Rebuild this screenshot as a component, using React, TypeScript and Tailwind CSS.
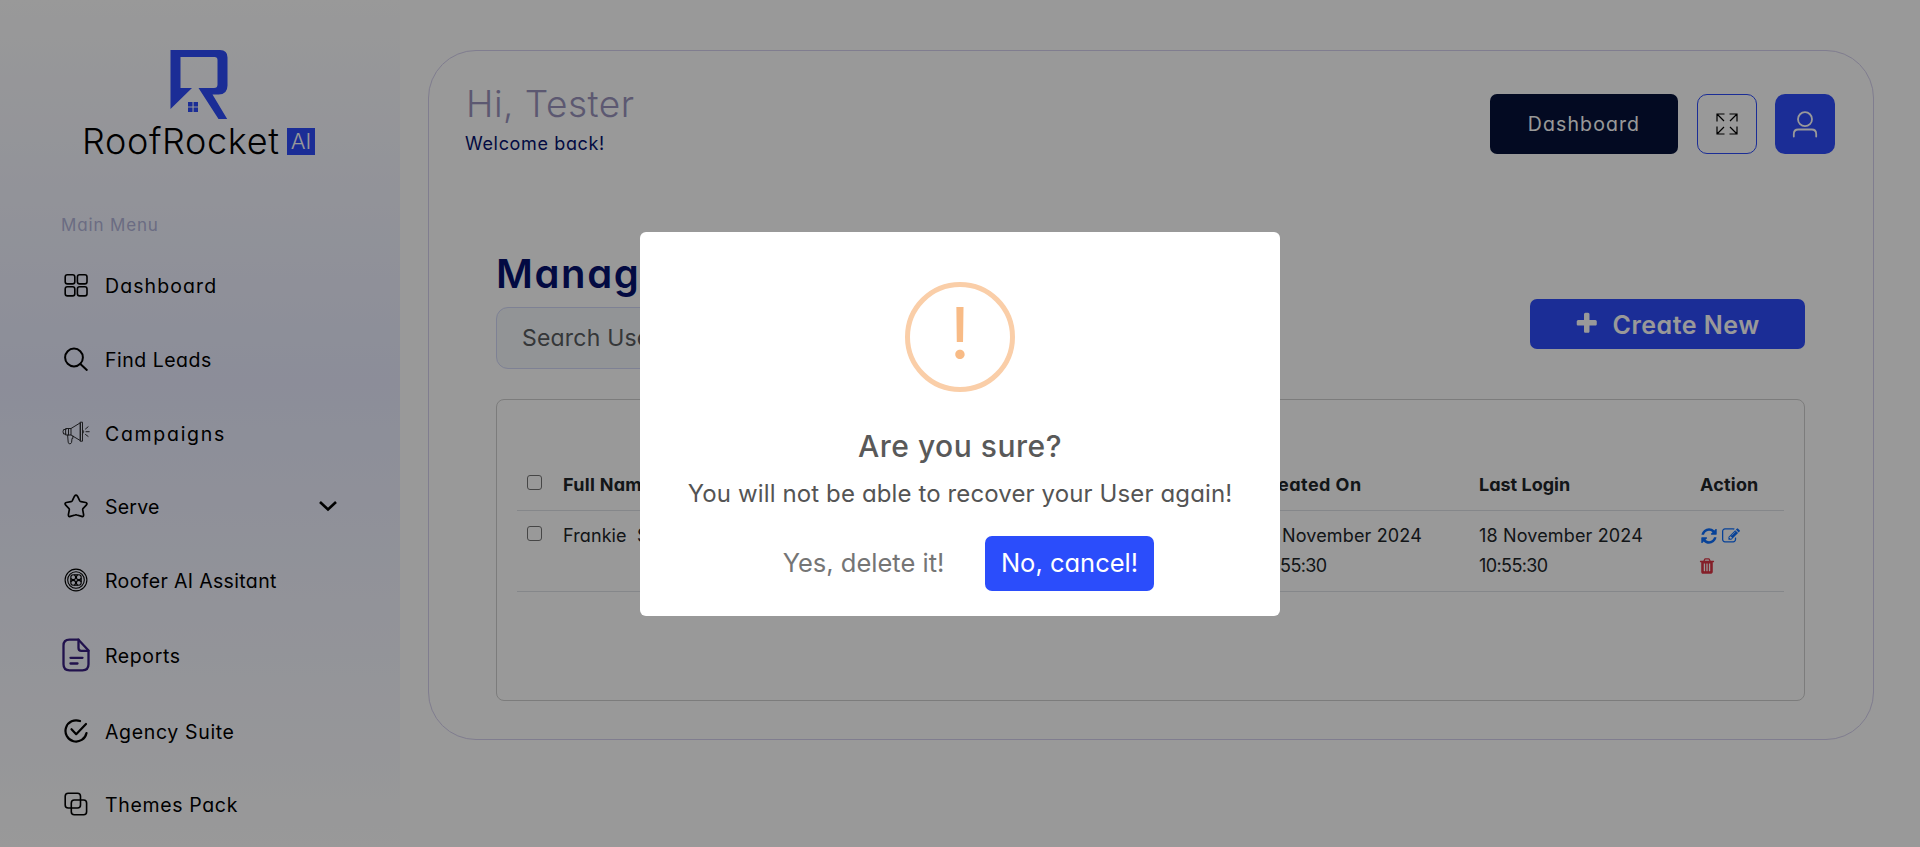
import type { ReactNode } from 'react';

const stroke = {
  fill: 'none',
  stroke: 'currentColor',
  strokeLinecap: 'round' as const,
  strokeLinejoin: 'round' as const,
};

function DashboardIcon() {
  return (
    <svg width="24" height="24" viewBox="0 0 24 24" {...stroke} strokeWidth="1.6">
      <rect x="1.2" y="1.7" width="9.6" height="9.2" rx="2.2" />
      <rect x="13.4" y="1.7" width="9.6" height="9.2" rx="2.2" />
      <rect x="1.2" y="13.7" width="9.6" height="9.2" rx="2.2" />
      <rect x="13.4" y="13.7" width="9.6" height="9.2" rx="2.2" />
    </svg>
  );
}

function SearchIcon() {
  return (
    <svg width="24" height="24" viewBox="0 0 24 24" {...stroke} strokeWidth="2">
      <circle cx="10" cy="10.5" r="8.9" />
      <path d="M16.4 17l6.4 5.9" />
    </svg>
  );
}

function CampaignIcon() {
  return (
    <svg width="28" height="24" viewBox="0 0 28 24" {...stroke} strokeWidth="1" className="opacity-80">
      <path d="M4 7.5h5v6.500H4zM9 7.500L18.500 1.700v18L9 14M18.500 1.200h2v19h-2z" />
      <path d="M6.500 7.500V14M4 8.500H1.600Q.4 10.700 1.600 13H4M20.600 8.500q2.400 2.200 0 4.400" />
      <path d="M5.600 14.200l.6 7q.2 1.600 1.600 1.600t1.800-1.400l.4-4h.9v-2.400" />
      <path d="M23.500 8l2.600-2.200M24 10.700h3.200M23.500 13.500l2.600 1.900" />
    </svg>
  );
}

function StarIcon() {
  return (
    <svg width="24" height="24" viewBox="0 0 24 24" {...stroke} strokeWidth="1.7">
      <path d="M10.500 2.200q1.500-2 3 0l2.300 4.600q.4.700 1.200.9l4.700.8q2 .6.800 2.400l-3.300 3.400q-.6.700-.5 1.500l.9 4.900q.2 2.400-1.900 1.700l-4.800-1.400q-.9-.3-1.800 0l-4.800 1.400q-2.100.7-1.900-1.700l.9-4.900q.1-.8-.5-1.500L1.500 10.900Q.3 9.100 2.300 8.500L7 7.700q.8-.2 1.200-.9z" />
    </svg>
  );
}

function AssistantIcon() {
  return (
    <svg width="24" height="24" viewBox="0 0 24 24" {...stroke} strokeWidth="1.1">
      <circle cx="12" cy="12" r="10.9" />
      <circle cx="12" cy="12" r="8.3" />
      <circle cx="9.2" cy="9.2" r="2.4" />
      <circle cx="14.8" cy="9.2" r="2.4" />
      <circle cx="9.2" cy="14.8" r="2.4" />
      <circle cx="14.8" cy="14.8" r="2.4" />
      <path d="M10.500 6.800h3M10.500 17.200h3M6.800 10.500v3M17.200 10.500v3" />
    </svg>
  );
}

function ReportIcon() {
  return (
    <svg width="28" height="34" viewBox="0 0 28 34" {...stroke} strokeWidth="2.3" className="text-[#371e80]">
      <path d="M16.500 1.700H7.500Q1.500 1.700 1.500 7.700v18.600q0 6 6 6h13q6 0 6-6V12.500z" />
      <path d="M16.500 1.700v8.300q0 2.800 2.800 2.800h7.200M8.500 19.800h12M8.500 25.500h7" />
    </svg>
  );
}

function AgencyIcon() {
  return (
    <svg width="24" height="24" viewBox="0 0 24 24" {...stroke} strokeWidth="2.2">
      <path d="M16 2.100A10.600 10.600 0 1 0 22.500 14" />
      <path d="M7.500 10.200l4.700 5L22 5" />
    </svg>
  );
}

function ThemesIcon() {
  return (
    <svg width="24" height="24" viewBox="0 0 24 24" {...stroke} strokeWidth="1.6">
      <rect x="1.2" y="1.2" width="15.3" height="14.8" rx="3" />
      <rect x="7.3" y="8" width="15.3" height="14.8" rx="3" />
    </svg>
  );
}

function FaIcon({ d, className }: { d: string; className: string }) {
  return (
    <svg viewBox="0 0 1792 1792" className={className} fill="currentColor">
      <path d={d} />
    </svg>
  );
}

const PLUS =
  'M1600 736v192q0 40-28 68t-68 28h-416v416q0 40-28 68t-68 28h-192q-40 0-68-28t-28-68v-416h-416q-40 0-68-28t-28-68v-192q0-40 28-68t68-28h416v-416q0-40 28-68t68-28h192q40 0 68 28t28 68v416h416q40 0 68 28t28 68z';
const REFRESH =
  'M1639 1056q0 5-1 7-64 268-268 434.5t-478 166.5q-146 0-282.5-55t-243.5-157l-129 129q-19 19-45 19t-45-19-19-45v-448q0-26 19-45t45-19h448q26 0 45 19t19 45-19 45l-137 137q71 66 161 102t187 36q134 0 250-65t186-179q11-17 53-117 8-23 30-23h192q13 0 22.5 9.5t9.5 22.5zm25-800v448q0 26-19 45t-45 19h-448q-26 0-45-19t-19-45 19-45l138-138q-148-137-349-137-134 0-250 65t-186 179q-11 17-53 117-8 23-30 23h-199q-13 0-22.5-9.5t-9.5-22.5v-7q65-268 270-434.5t480-166.5q146 0 284 55.5t245 156.5l130-129q19-19 45-19t45 19 19 45z';
const EDIT =
  'M888 1184l116-116-152-152-116 116v56h96v96h56zm440-720q-16-16-33 1l-350 350q-17 17-1 33t33-1l350-350q17-17 1-33zm80 594v190q0 119-84.5 203.5t-203.5 84.5h-832q-119 0-203.5-84.5t-84.5-203.5v-832q0-119 84.5-203.5t203.5-84.5h832q63 0 117 25 15 7 18 23 3 17-9 29l-49 49q-14 14-32 8-23-6-45-6h-832q-66 0-113 47t-47 113v832q0 66 47 113t113 47h832q66 0 113-47t47-113v-126q0-13 9-22l64-64q15-15 35-7t20 29zm-96-738l288 288-672 672h-288v-288zm444 132l-92 92-288-288 92-92q28-28 68-28t68 28l152 152q28 28 28 68t-28 68z';
const TRASH =
  'M704 1376v-704q0-14-9-23t-23-9h-64q-14 0-23 9t-9 23v704q0 14 9 23t23 9h64q14 0 23-9t9-23zm256 0v-704q0-14-9-23t-23-9h-64q-14 0-23 9t-9 23v704q0 14 9 23t23 9h64q14 0 23-9t9-23zm256 0v-704q0-14-9-23t-23-9h-64q-14 0-23 9t-9 23v704q0 14 9 23t23 9h64q14 0 23-9t9-23zm-544-992h448l-48-117q-7-9-17-11h-317q-10 2-17 11zm928 32v64q0 14-9 23t-23 9h-96v948q0 83-47 143.5t-113 60.5h-832q-66 0-113-58.5t-47-141.5v-952h-96q-14 0-23-9t-9-23v-64q0-14 9-23t23-9h309l70-167q15-37 54-63t79-26h320q40 0 79 26t54 63l70 167h309q14 0 23 9t9 23z';

type MenuItem = { label: string; icon: ReactNode; row: string; track: string; expandable?: boolean };

const menu: MenuItem[] = [
  { label: 'Dashboard', icon: <DashboardIcon />, row: 'h-[74px]', track: 'tracking-[1.1px]' },
  { label: 'Find Leads', icon: <SearchIcon />, row: 'h-[74px]', track: 'tracking-[0.5px]' },
  { label: 'Campaigns', icon: <CampaignIcon />, row: 'h-[74px]', track: 'tracking-[1.7px]' },
  { label: 'Serve', icon: <StarIcon />, row: 'h-[72px]', track: 'tracking-[0.2px]', expandable: true },
  { label: 'Roofer AI Assitant', icon: <AssistantIcon />, row: 'h-[75px]', track: 'tracking-[0.35px]' },
  { label: 'Reports', icon: <ReportIcon />, row: 'h-[76px]', track: 'tracking-[0.6px]' },
  { label: 'Agency Suite', icon: <AgencyIcon />, row: 'h-[76px]', track: 'tracking-[0.65px]' },
  { label: 'Themes Pack', icon: <ThemesIcon />, row: 'h-[70px]', track: 'tracking-[0.65px]' },
];

function Logo() {
  return (
    <div className="flex h-[110px] w-[236px] flex-col">
      <svg width="60" height="72" viewBox="0 0 60 72" className="ml-[88px] shrink-0" fill="#2d4bfa">
        <path
          fillRule="evenodd"
          d="M.5 0H50Q57.500 0 57.500 7.500V35.500Q57.500 44.500 48.500 44.500H42.500L57.200 69H48.500L28.500 38H44Q47.500 38 47.500 34.500V10Q47.500 7 44.500 7H10.500V38H22L.5 59z"
        />
        <path d="M18 52h4.500v4.500H18zM23.600 52H28v4.500h-4.400zM18 57.600h4.500V62H18zM23.600 57.600H28V62h-4.400z" />
      </svg>
      <div className="mt-[5px] flex h-[28px] items-center">
        <span className="w-[205px] text-[36px] leading-none font-[350] tracking-[0.65px] whitespace-nowrap text-black">
          RoofRocket
        </span>
        <span className="flex h-[27px] w-[28px] items-center justify-center bg-[#2d4bfa] text-[22px] leading-none font-light text-white">
          AI
        </span>
      </div>
    </div>
  );
}

function Sidebar() {
  return (
    <aside className="flex h-full w-[400px] shrink-0 flex-col overflow-hidden bg-linear-to-b from-white via-[#e9ecff] via-45% to-white">
      <div className="h-[211px] pt-[50px] pl-[82px]">
        <Logo />
      </div>
      <p className="flex h-[30px] items-center pl-[61px] text-[17px] tracking-[0.85px] text-[#b2b4da]">Main Menu</p>
      <nav className="mt-[9px] flex flex-col text-black">
        {menu.map((m) => (
          <a key={m.label} className={`flex shrink-0 items-center pl-[61px] ${m.row}`}>
            <span className="flex w-[30px] justify-center pb-[4px]">{m.icon}</span>
            <span className={`ml-[14px] text-[19.5px] ${m.track}`}>{m.label}</span>
            {m.expandable && (
              <svg width="20" height="12" viewBox="0 0 20 12" {...stroke} strokeLinecap="butt" strokeLinejoin="miter" strokeWidth="2.6" className="mr-[62px] mb-[4px] ml-auto">
                <path d="M2 2l8 7.500L18 2" />
              </svg>
            )}
          </a>
        ))}
      </nav>
    </aside>
  );
}

function Header() {
  return (
    <header className="flex h-[110px] items-start justify-between">
      <div>
        <h1 className="mt-[3px] h-[36px] pl-[1px] text-[37px] leading-[36px] font-[350] tracking-[0.5px] text-[#9993bc]">Hi, Tester</h1>
        <p className="mt-[11px] text-[18px] leading-[22px] tracking-[0.65px] text-[#05126e]">Welcome back!</p>
      </div>
      <div className="mt-[11px] flex">
        <button className="h-[60px] w-[188px] rounded-[7px] bg-[#051239] pt-[1px] text-[19.5px] tracking-[1.1px] text-white">
          Dashboard
        </button>
        <button className="ml-[19px] flex h-[60px] w-[60px] items-center justify-center rounded-[10px] border border-[#2d4bfa] text-black">
          <svg width="22" height="22" viewBox="0 0 22 22" fill="none" stroke="currentColor" strokeWidth="1.2" className="-mt-[1px]">
            <path d="M1 8.500V1h7.500M1 1l7 7M13.500 1H21v7.500M21 1l-7 7M1 13.500V21h7.500M1 21l7-7M13.500 21H21v-7.500M21 21l-7-7" />
          </svg>
        </button>
        <button className="ml-[18px] flex h-[60px] w-[60px] items-center justify-center rounded-[10px] bg-[#2d4bfa] text-white">
          <svg width="26" height="27" viewBox="0 0 26 27" {...stroke} strokeWidth="1.8">
            <circle cx="13" cy="8.2" r="7" />
            <path d="M1.800 25.500v-2.500q0-4.500 4.500-4.500h13.400q4.500 0 4.500 4.500v2.500" />
          </svg>
        </button>
      </div>
    </header>
  );
}

function Checkbox() {
  return <span className="block h-[15px] w-[15px] rounded-[3px] border border-[#767676]" />;
}

const cols = 'grid grid-cols-[46px_695px_221px_221px_1fr]';

function UsersTable() {
  return (
    <section className="mt-[30px] h-[302px] rounded-[8px] border border-[#cfcfcf] px-[20px] pt-[67px] text-[18px] leading-[30px] text-[#212529]">
      <div className={`${cols} h-[44px] border-b border-[#dee2e6] font-bold`}>
        <span className="pt-[8px] pl-[10px]">
          <Checkbox />
        </span>
        <span className="pt-[3px] tracking-[0.3px]">Full Name</span>
        <span className="-ml-[1px] pt-[3px] tracking-[0.45px]">Created On</span>
        <span className="pt-[3px]">Last Login</span>
        <span className="pt-[3px] tracking-[0.2px]">Action</span>
      </div>
      <div className={`${cols} h-[81px] border-b border-[#dee2e6]`}>
        <span className="pt-[15px] pl-[10px]">
          <Checkbox />
        </span>
        <span className="pt-[10px] tracking-[0.1px] whitespace-pre">Frankie  Smith</span>
        {[0, 1].map((k) => (
          <span key={k} className="pt-[10px]">
            <span className="tracking-[0.15px]">18 November 2024</span>
            <br />
            <span className="tracking-[-0.6px]">10:55:30</span>
          </span>
        ))}
        <span className="flex flex-col pt-[16px]">
          <span className="flex gap-[4px] text-[#0d6efd]">
            <FaIcon d={REFRESH} className="h-[18px] w-[18px]" />
            <FaIcon d={EDIT} className="h-[18px] w-[18px]" />
          </span>
          <span className="mt-[12px] text-[#dc3545]">
            <FaIcon d={TRASH} className="-ml-[2px] h-[18px] w-[18px]" />
          </span>
        </span>
      </div>
    </section>
  );
}

function ConfirmDialog() {
  return (
    <div className="absolute inset-0 flex items-center justify-center bg-black/40">
      <div className="flex h-[384px] w-[640px] flex-col items-center rounded-[6px] bg-white pt-[50px]">
        <div className="flex h-[110px] w-[110px] items-center justify-center rounded-full border-[5px] border-[#facea8]">
          <span className="pb-[7px] text-[71px] leading-none text-[#f8bb86]">!</span>
        </div>
        <h2 className="mt-[35px] text-[30px] leading-[38px] font-medium tracking-[0.5px] text-[#595959]">Are you sure?</h2>
        <p className="mt-[14px] text-[24px] leading-[30px] tracking-[0.12px] whitespace-nowrap text-[#545454]">
          You will not be able to recover your User again!
        </p>
        <div className="mt-[27px] flex gap-[24px] text-[25.5px]">
          <button className="h-[55px] w-[195px] rounded-[7px] text-[#757575]">Yes, delete it!</button>
          <button className="h-[55px] w-[169px] rounded-[7px] bg-[#2b4dfb] text-white">No, cancel!</button>
        </div>
      </div>
    </div>
  );
}

export default function App() {
  return (
    <div className="relative flex h-[847px] w-[1920px] overflow-hidden bg-white font-['Inter',sans-serif] [font-feature-settings:'cv11']">
      <Sidebar />
      <main className="flex-1 py-[50px] pr-[46px] pl-[28px]">
        <div className="h-[690px] rounded-[48px] border border-[#d5d0ee] pt-[32px] pr-[38px] pl-[36px]">
          <Header />
          <div className="mr-[30px] ml-[31px] pt-[56px]">
            <div className="flex items-end justify-between">
              <div>
                <h2 className="h-[50px] text-[40px] leading-[49px] font-semibold tracking-[1.6px] text-[#05126e]">Manage Users</h2>
                <div className="mt-[8px] flex h-[62px] w-[420px] items-center rounded-[12px] border border-[#d2d7f7] bg-[#f4f7fa] pl-[25px] text-[23px] tracking-[0.2px] text-[#595c5f]">
                  Search User
                </div>
              </div>
              <button className="mb-[20px] flex h-[50px] w-[275px] items-center rounded-[7px] bg-[#2d4bfa] pl-[44px] text-[25px] font-semibold tracking-[0.5px] text-white">
                <FaIcon d={PLUS} className="h-[25.5px] w-[25.5px]" />
                <span className="ml-[13px] pt-[3px]">Create New</span>
              </button>
            </div>
            <UsersTable />
          </div>
        </div>
      </main>
      <ConfirmDialog />
    </div>
  );
}
